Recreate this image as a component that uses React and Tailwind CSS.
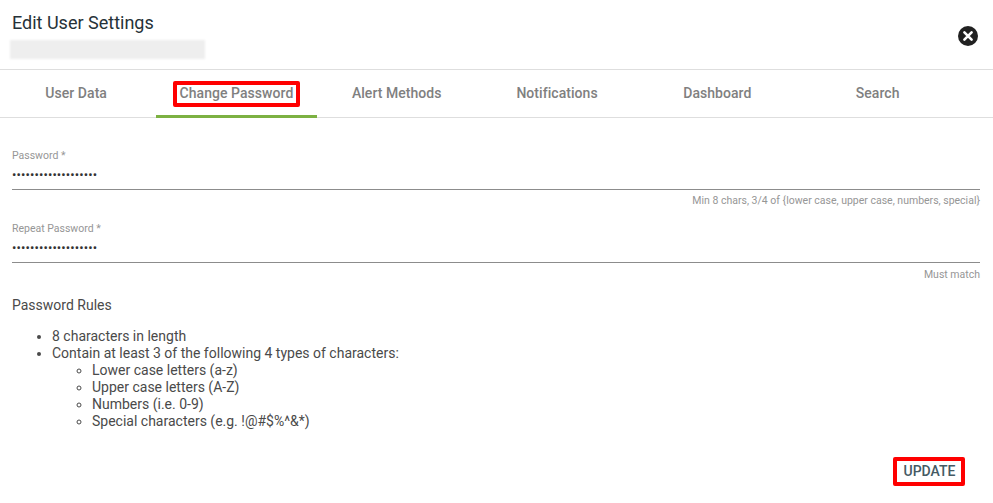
import React from "react";

const font = { fontFamily: "Roboto, sans-serif" };
const tabs = ["User Data", "Change Password", "Alert Methods", "Notifications", "Dashboard", "Search"];

function Field({ label, hint, mt, hintMt }) {
  return (
    <div className={mt}>
      <div className="text-[10.5px] leading-[14px] text-[#969696]">{label}</div>
      <div className="h-[27px] border-b border-[#8c8c8c] pt-[4px] text-[13px] leading-[16px] text-[#333]">
        <span className="tracking-[0.1px]">{"•".repeat(19)}</span>
      </div>
      <div className={`${hintMt} text-right text-[10.5px] leading-[14px] text-[#969696]`}>{hint}</div>
    </div>
  );
}

export default function App() {
  return (
    <div className="h-[503px] w-[993px] overflow-hidden bg-white" style={font}>
      <header className="flex h-[70px] items-start justify-between border-b border-[#dedede] pl-[12px] pr-[15px]">
        <div>
          <h1 className="mt-[13px] text-[18px] leading-[20px] font-normal text-[#263238]">Edit User Settings</h1>
          <div className="-ml-[2px] mt-[7px] h-[19px] w-[195px] bg-[#eeeeee] blur-[1px]" />
        </div>
        <svg className="mt-[26px]" width="20" height="20" viewBox="0 0 20 20">
          <circle cx="10" cy="10" r="10" fill="#212121" />
          <path d="M6.4 6.4 13.6 13.6M13.6 6.4 6.4 13.6" stroke="#fff" strokeWidth="2.6" strokeLinecap="round" />
        </svg>
      </header>

      <nav className="-ml-[4px] flex h-[48px] border-b border-[#dedede]">
        {tabs.map((t, i) => (
          <div
            key={t}
            className={`flex h-[48px] w-[160.3px] items-center justify-center text-[14px] font-medium tracking-[0.05px] text-[#808080] ${
              i === 1 ? "border-b-[3px] border-[#7cb142] pt-[3px]" : "pb-[2px]"
            }`}
          >
            {i === 1 ? (
              <span className="rounded-[2px] border-[4px] border-[#ff0000] px-[3px] pb-[1px] leading-[17px]">{t}</span>
            ) : (
              t
            )}
          </div>
        ))}
      </nav>

      <main className="pl-[12px] pr-[13px]">
        <Field mt="mt-[31px]" hintMt="mt-[4px]" label="Password *" hint="Min 8 chars, 3/4 of {lower case, upper case, numbers, special}" />
        <Field mt="mt-[14px]" hintMt="mt-[5px]" label="Repeat Password *" hint="Must match" />

        <p className="mt-[14px] text-[14px] leading-[18px] text-[#4a4a4a]">Password Rules</p>
        <ul className="mt-[14px] list-disc pl-[40px] text-[14px] leading-[17px] text-[#4a4a4a]">
          <li>8 characters in length</li>
          <li>
            Contain at least 3 of the following 4 types of characters:
            <ul className="list-[circle] pl-[40px]">
              <li>Lower case letters (a-z)</li>
              <li>Upper case letters (A-Z)</li>
              <li>Numbers (i.e. 0-9)</li>
              <li>Special characters (e.g. !@#$%^&amp;*)</li>
            </ul>
          </li>
        </ul>

        <div className="mt-[27px] flex justify-end pr-[15px]">
          <button className="flex h-[29px] w-[72px] items-center justify-center rounded-[2px] border-[4px] border-[#ff0000] pl-[1px] text-[14px] font-medium text-[#455a64]">
            UPDATE
          </button>
        </div>
      </main>
    </div>
  );
}
